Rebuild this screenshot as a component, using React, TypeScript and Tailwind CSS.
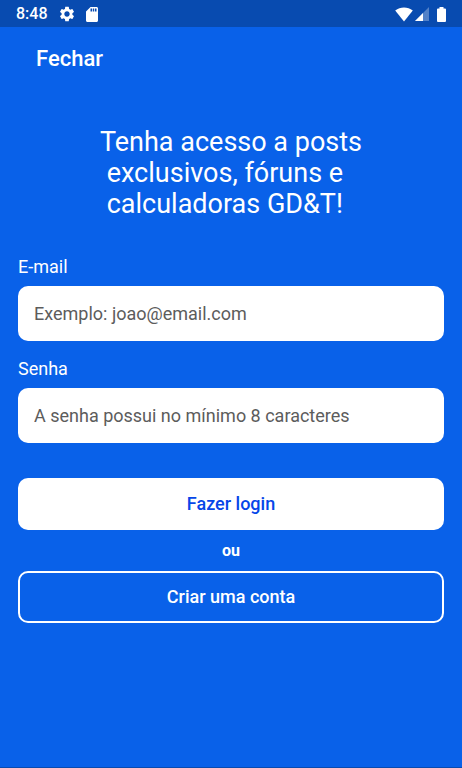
import { useState } from "react";
import type { FormEvent } from "react";

/**
 * Android status bar: clock and notification icons on the left,
 * wifi, signal and battery on the right.
 */
function StatusBar() {
  return (
    <div className="flex h-[27px] items-center justify-between bg-[#084bb0] px-4 pt-px">
      <div className="flex items-center gap-2.5">
        <span className="text-base leading-6 font-medium">8:48</span>
        <svg viewBox="0 0 24 24" className="h-[18px] w-[18px]" fill="currentColor" aria-hidden="true">
          <path d="M19.14 12.94c.04-.3.06-.61.06-.94 0-.32-.02-.64-.07-.94l2.03-1.58a.49.49 0 0 0 .12-.61l-1.92-3.32a.488.488 0 0 0-.59-.22l-2.39.96c-.5-.38-1.03-.7-1.62-.94l-.36-2.54a.484.484 0 0 0-.48-.41h-3.84c-.24 0-.43.17-.47.41l-.36 2.54c-.59.24-1.13.57-1.62.94l-2.39-.96c-.22-.08-.47 0-.59.22L2.74 8.87c-.12.21-.08.47.12.61l2.03 1.58c-.05.3-.09.63-.09.94s.02.64.07.94l-2.03 1.58a.49.49 0 0 0-.12.61l1.92 3.32c.12.22.37.29.59.22l2.39-.96c.5.38 1.03.7 1.62.94l.36 2.54c.05.24.24.41.48.41h3.84c.24 0 .44-.17.47-.41l.36-2.54c.59-.24 1.13-.56 1.62-.94l2.39.96c.22.08.47 0 .59-.22l1.92-3.32c.12-.22.07-.47-.12-.61l-2.01-1.58zM12 15.6c-1.98 0-3.6-1.62-3.6-3.6s1.62-3.6 3.6-3.6 3.6 1.62 3.6 3.6-1.62 3.6-3.6 3.6z" />
        </svg>
        <svg viewBox="4 2 16 20" className="h-[15px] w-3" fill="currentColor" aria-hidden="true">
          <path d="M18 2h-8L4.02 8 4 20c0 1.1.9 2 2 2h12c1.1 0 2-.9 2-2V4c0-1.1-.9-2-2-2zm-6 6h-2V4h2v4zm3 0h-2V4h2v4zm3 0h-2V4h2v4z" />
        </svg>
      </div>
      <div className="flex items-center">
        <svg viewBox="0 0 18 15" className="h-[15px] w-[18px]" fill="currentColor" aria-hidden="true">
          <path d="M9 14.5 0.2 3.6C2.8 1.6 5.8.6 9 .6s6.2 1 8.8 3z" />
        </svg>
        <svg viewBox="0 0 14 14" className="ml-0.5 h-3.5 w-3.5" fill="currentColor" aria-hidden="true">
          <path d="M0 14 14 0v14z" fillOpacity="0.3" />
          <path d="M0 14 8 6v8z" />
        </svg>
        <svg viewBox="0 0 9 15" className="ml-2 h-[15px] w-[9px]" fill="currentColor" aria-hidden="true">
          <path d="M6.5 1.5V0h-4v1.5H1a1 1 0 0 0-1 1V14a1 1 0 0 0 1 1h7a1 1 0 0 0 1-1V2.500a1 1 0 0 0-1-1z" />
        </svg>
      </div>
    </div>
  );
}

interface FieldProps {
  id: string;
  type: "email" | "password";
  label: string;
  placeholder: string;
  value: string;
  onChange: (value: string) => void;
}

function Field({ id, type, label, placeholder, value, onChange }: FieldProps) {
  return (
    <div className="flex flex-col gap-[7px]">
      <label htmlFor={id} className="text-lg leading-6">
        {label}
      </label>
      <input
        id={id}
        type={type}
        placeholder={placeholder}
        value={value}
        onChange={(e) => onChange(e.target.value)}
        className="h-[55px] w-full rounded-[10px] bg-white px-4 text-lg text-gray-900 placeholder:text-[#5c5c5c] focus:outline-none"
      />
    </div>
  );
}

export default function App() {
  const [email, setEmail] = useState("");
  const [password, setPassword] = useState("");

  const handleSubmit = (e: FormEvent) => {
    e.preventDefault();
  };

  return (
    <div className="flex min-h-screen flex-col border-b border-[#084bb0] bg-[#0961e9] font-[Roboto,sans-serif] text-white">
      <StatusBar />

      {/* Header */}
      <header className="px-9 pt-[18px]">
        <button type="button" className="block text-[22px] leading-7 font-medium">
          Fechar
        </button>
      </header>

      <main className="px-[18px] pt-[54px]">
        <h1 className="mx-auto w-fit text-[27px] leading-[31px] whitespace-pre">
          {"Tenha acesso a posts\n exclusivos, fóruns e\n calculadoras GD&T!"}
        </h1>

        {/* Login form */}
        <form onSubmit={handleSubmit} className="mt-[35px] flex flex-col">
          <div className="flex flex-col gap-4">
            <Field
              id="email"
              type="email"
              label="E-mail"
              placeholder="Exemplo: joao@email.com"
              value={email}
              onChange={setEmail}
            />
            <Field
              id="password"
              type="password"
              label="Senha"
              placeholder="A senha possui no mínimo 8 caracteres"
              value={password}
              onChange={setPassword}
            />
          </div>

          <button
            type="submit"
            className="mt-[35px] h-[52px] rounded-[10px] bg-white text-lg font-medium text-[#0646e8]"
          >
            Fazer login
          </button>
          <p className="pt-[11px] pb-2.5 text-center text-base leading-5 font-bold">ou</p>
          <button
            type="button"
            className="h-[52px] rounded-[10px] border-2 border-white text-lg font-medium"
          >
            Criar uma conta
          </button>
        </form>
      </main>
    </div>
  );
}
